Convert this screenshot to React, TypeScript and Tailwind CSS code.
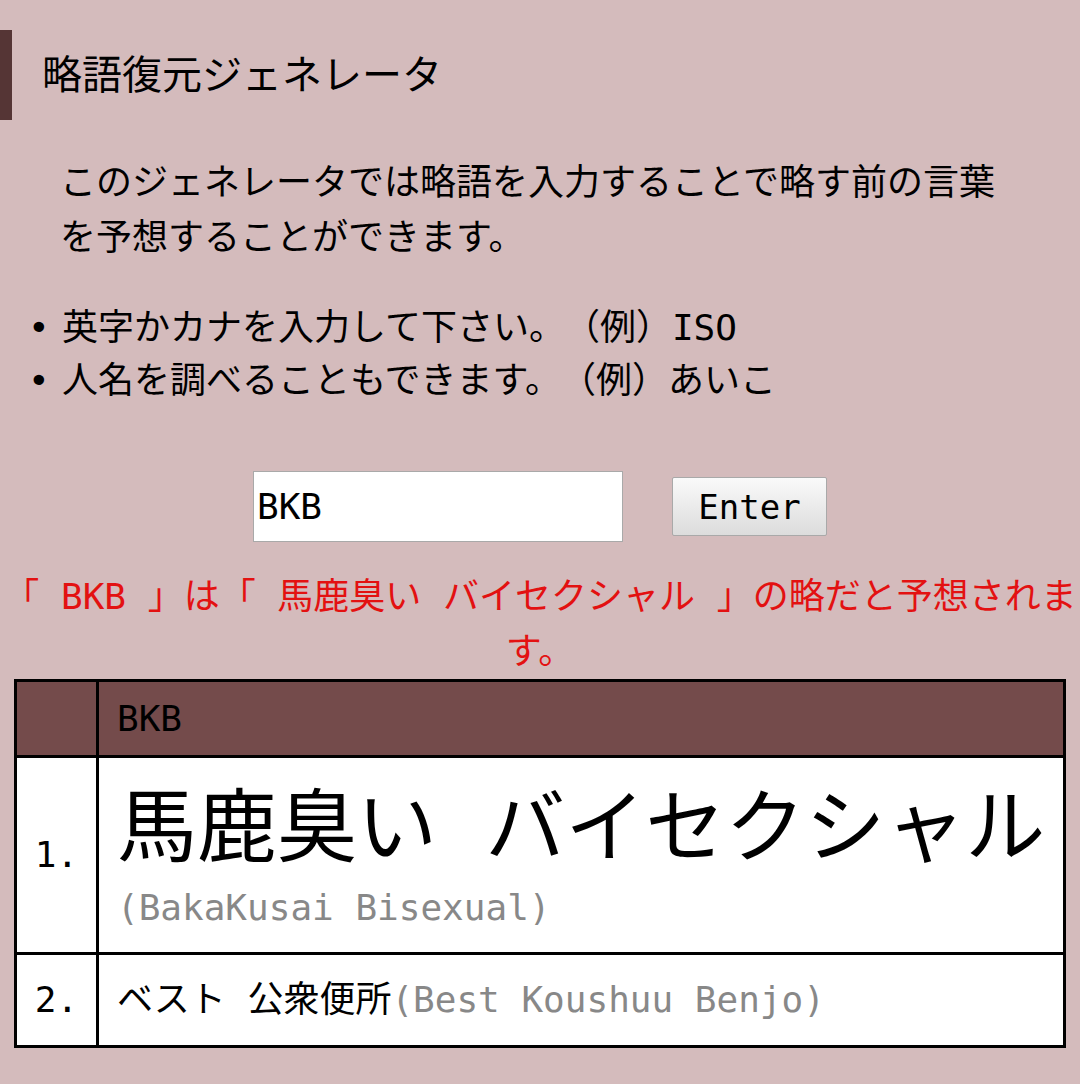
import React from "react";

const mono = { fontFamily: '"DejaVu Sans Mono", "Noto Sans CJK JP", monospace' };

export default function App() {
  return (
    <div
      className="min-h-[1084px] w-full bg-[#d4bbbc] text-black pt-[30px]"
      style={mono}
    >
      <h1 className="h-[90px] border-l-[12px] border-[#553535] pl-[30px] flex items-center text-[40px] font-normal leading-none">
        略語復元ジェネレータ
      </h1>

      <p className="mt-[35px] ml-[60px] w-[954px] text-[36px] leading-[55px]">
        このジェネレータでは略語を入力することで略す前の言葉を予想することができます。
      </p>

      <ul className="mt-[36px] text-[36px] leading-[53px]">
        <li className="flex">
          <span className="w-[62px] pl-[28px]">•</span>
          <span className="whitespace-nowrap">
            英字かカナを入力して下さい。<span className="ml-[17px]">（例）ISO</span>
          </span>
        </li>
        <li className="flex">
          <span className="w-[62px] pl-[28px]">•</span>
          <span className="whitespace-nowrap">
            人名を調べることもできます。<span className="ml-[17px]">（例）あいこ</span>
          </span>
        </li>
      </ul>

      <div className="mt-[64px] flex items-center justify-center gap-[49px]">
        <input
          type="text"
          defaultValue="BKB"
          readOnly
          className="w-[370px] h-[71px] bg-white border border-[#a9a9a9] pl-[3px] text-[36px] outline-none"
          style={mono}
        />
        <button
          className="w-[155px] h-[59px] border border-[#a9a9a9] rounded-[2px] bg-gradient-to-b from-[#fafafa] to-[#dcdcdc] text-[34px] leading-none"
          style={mono}
        >
          Enter
        </button>
      </div>

      <p className="mt-[27px] w-full text-center text-[36px] leading-[55px] text-[#e31111]">
        「 BKB 」は「 馬鹿臭い バイセクシャル 」の略だと予想されます。
      </p>

      <div className="ml-[14px] w-[1052px] border-[3px] border-black">
        <div className="flex h-[76px] bg-[#744b4b] border-b-[3px] border-black">
          <div className="w-[82px] border-r-[3px] border-black" />
          <div className="flex-1 flex items-center pl-[18px] text-[36px] leading-none">BKB</div>
        </div>
        <div className="flex h-[197px] bg-white border-b-[3px] border-black">
          <div className="w-[82px] border-r-[3px] border-black flex items-center justify-center text-[36px]">
            1.
          </div>
          <div className="flex-1 pl-[18px] pt-[20px]">
            <div className="text-[80px] leading-[100px] whitespace-nowrap">馬鹿臭い バイセクシャル</div>
            <div className="text-[36px] leading-[60px] text-[#888888]">(BakaKusai Bisexual)</div>
          </div>
        </div>
        <div className="flex h-[90px] bg-white">
          <div className="w-[82px] border-r-[3px] border-black flex items-center justify-center text-[36px]">
            2.
          </div>
          <div className="flex-1 flex items-center pl-[18px] text-[36px] whitespace-nowrap">
            ベスト 公衆便所<span className="text-[#888888]">(Best Koushuu Benjo)</span>
          </div>
        </div>
      </div>
    </div>
  );
}
